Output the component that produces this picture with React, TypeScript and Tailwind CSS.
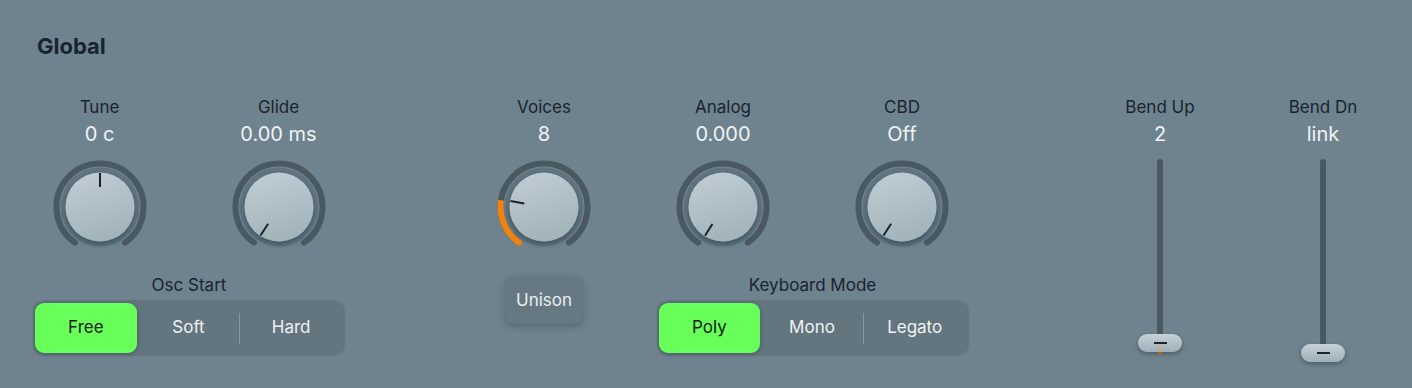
import React, {useId} from 'react';

const pt = (a: number, r: number) => {
    const rad = a * Math.PI / 180
    return [50 + r * Math.sin(rad), 50 - r * Math.cos(rad)]
}

const arc = (a1: number, a2: number, r: number) => {
    const [x1, y1] = pt(a1, r)
    const [x2, y2] = pt(a2, r)
    const large = a2 - a1 > 180 ? 1 : 0
    return `M${x1} ${y1} A${r} ${r} 0 ${large} 1 ${x2} ${y2}`
}

const Knob = ({angle, fillTo}: {angle: number, fillTo?: number}) => {
    const id = useId().replace(/:/g, '')
    const [ix1, iy1] = pt(angle, 34)
    const [ix2, iy2] = pt(angle, 20)
    return (
        <svg width="100" height="100" viewBox="0 0 100 100">
            <defs>
                <linearGradient id={`face${id}`} x1="0" y1="0" x2="0.3" y2="1">
                    <stop offset="0" stopColor="#c1cfd5"/>
                    <stop offset="1" stopColor="#a4b4bb"/>
                </linearGradient>
                <filter id={`sh${id}`} x="-30%" y="-30%" width="160%" height="170%">
                    <feDropShadow dx="0" dy="3" stdDeviation="2.5" floodColor="#1d2a31" floodOpacity="0.45"/>
                </filter>
            </defs>
            <path d={arc(-145, 145, 43.5)} fill="none" stroke="#4a5960" strokeWidth="6" strokeLinecap="round"/>
            {fillTo !== undefined && (
                <>
                    <path d={arc(-145, fillTo, 43.5)} fill="none" stroke="#f0820f" strokeWidth="6"/>
                    <circle cx={pt(-145, 43.5)[0]} cy={pt(-145, 43.5)[1]} r="3" fill="#f0820f"/>
                </>
            )}
            <circle cx="50" cy="50" r="39.5" fill="#607480"/>
            <circle cx="50" cy="50" r="34.5" fill={`url(#face${id})`} filter={`url(#sh${id})`}/>
            <line x1={ix1} y1={iy1} x2={ix2} y2={iy2} stroke="#17222b" strokeWidth="2"/>
        </svg>
    )
}

const KnobCol = ({label, value, angle, fillTo}: {label: string, value: string, angle: number, fillTo?: number}) => (
    <div className="flex flex-col items-center w-[100px]">
        <div className="h-[22px] leading-[22px] text-[17px] text-[#18242e] whitespace-nowrap">{label}</div>
        <div className="mt-[3px] h-[26px] leading-[26px] text-[20px] text-[#eef3f5] whitespace-nowrap">{value}</div>
        <div className="mt-[10px]">
            <Knob angle={angle} fillTo={fillTo}/>
        </div>
    </div>
)

const Segmented = ({items, selected}: {items: string[], selected: number}) => (
    <div className="flex items-center w-[312px] h-[56px] rounded-[12px] bg-[#63767f] pl-[2px] pr-[3px] py-[3px]">
        {items.map((item, i) => (
            <React.Fragment key={item}>
                {i > 0 && (
                    <div className={i !== selected && i - 1 !== selected
                        ? "w-px h-[31px] bg-[#8598a1]"
                        : "w-px h-[31px]"}/>
                )}
                <div className={i === selected
                    ? "flex-1 h-full flex items-center justify-center rounded-[9px] bg-[#68ff5b] text-[#142010] text-[17px] shadow-[0_1px_4px_rgba(20,30,35,0.35)]"
                    : "flex-1 h-full flex items-center justify-center text-[#eef2f4] text-[17px]"}>
                    {item}
                </div>
            </React.Fragment>
        ))}
    </div>
)

const SliderCol = ({label, value, trackClass, thumbClass, orange}: {label: string, value: string, trackClass: string, thumbClass: string, orange?: boolean}) => (
    <div className="flex flex-col items-center w-[80px]">
        <div className="h-[22px] leading-[22px] text-[17px] text-[#18242e] whitespace-nowrap">{label}</div>
        <div className="mt-[3px] h-[26px] leading-[26px] text-[20px] text-[#eef3f5] whitespace-nowrap">{value}</div>
        <div className="relative mt-[12px] w-[44px] h-[205px]">
            <div className={trackClass}/>
            {orange && <div className="absolute left-[20px] top-[184px] w-[4px] h-[11px] bg-[#e8801a]"/>}
            <div className={thumbClass}>
                <div className="w-[13px] h-[2px] bg-[#1c2630]"/>
                {orange && <div className="absolute left-[20px] top-[10px] w-[3px] h-[8px] bg-[#e8a060]/50"/>}
            </div>
        </div>
    </div>
)

const App = () => {
    return (
        <div className="w-[1412px] h-[388px] bg-[#6e838e] font-['Inter',sans-serif] overflow-hidden">
            <div className="pl-[37px] pt-[32px] h-[60px] leading-[28px] text-[22px] font-bold text-[#17232d]">
                Global
            </div>

            <div className="flex items-start pl-[33px] mt-[36px]">
                <div className="flex flex-col items-center w-[312px]">
                    <div className="flex gap-[79px]">
                        <KnobCol label="Tune" value="0 c" angle={0}/>
                        <KnobCol label="Glide" value="0.00 ms" angle={-147}/>
                    </div>
                    <div className="mt-[17px] h-[22px] leading-[22px] text-[17px] text-[#18242e]">Osc Start</div>
                    <div className="mt-[4px]">
                        <Segmented items={['Free', 'Soft', 'Hard']} selected={0}/>
                    </div>
                </div>

                <div className="flex flex-col items-center w-[100px] ml-[149px]">
                    <KnobCol label="Voices" value="8" angle={-80} fillTo={-81}/>
                    <div className="mt-[20px] w-[78px] h-[47px] rounded-[9px] bg-[#667983] shadow-[0_2px_7px_rgba(30,42,50,0.35)] flex items-center justify-center text-[17px] text-[#e9eef1]">
                        Unison
                    </div>
                </div>

                <div className="flex flex-col items-center w-[313px] ml-[62px]">
                    <div className="flex gap-[79px]">
                        <KnobCol label="Analog" value="0.000" angle={-148}/>
                        <KnobCol label="CBD" value="Off" angle={-147}/>
                    </div>
                    <div className="mt-[17px] h-[22px] leading-[22px] text-[17px] text-[#18242e]">Keyboard Mode</div>
                    <div className="mt-[4px]">
                        <Segmented items={['Poly', 'Mono', 'Legato']} selected={0}/>
                    </div>
                </div>

                <div className="flex gap-[83px] ml-[151px]">
                    <SliderCol label="Bend Up" value="2" orange
                               trackClass="mx-auto w-[6px] h-[184px] rounded-full bg-[#4a5960]"
                               thumbClass="absolute left-0 top-[175px] w-[44px] h-[18px] rounded-[9px] bg-gradient-to-b from-[#c6d2d8] to-[#9eafb6] shadow-[0_2px_4px_rgba(20,30,35,0.4)] flex items-center justify-center"/>
                    <SliderCol label="Bend Dn" value="link"
                               trackClass="mx-auto w-[6px] h-[194px] rounded-full bg-[#4a5960]"
                               thumbClass="absolute left-0 top-[185px] w-[44px] h-[18px] rounded-[9px] bg-gradient-to-b from-[#c6d2d8] to-[#9eafb6] shadow-[0_2px_4px_rgba(20,30,35,0.4)] flex items-center justify-center"/>
                </div>
            </div>
        </div>
    )
}

export default App;
